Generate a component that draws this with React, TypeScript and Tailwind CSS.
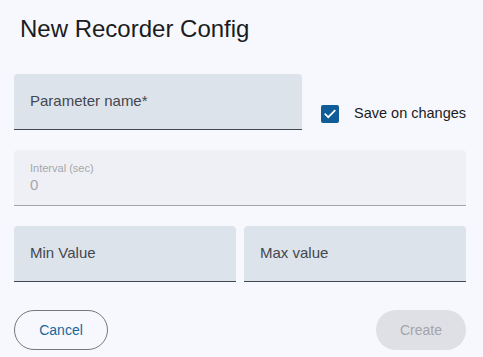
import React from "react";

export default function App() {
  return (
    <div
      className="w-[483px] h-[357px] bg-[#f7f8fd] text-[#1b1b1f] overflow-hidden"
      style={{ fontFamily: '"Liberation Sans", Arial, sans-serif' }}
    >
      <div className="pt-[13px] pl-[20px] text-[24px] leading-[32px] text-[#1b1c20]">
        New Recorder Config
      </div>
      <div className="ml-[14px] w-[452px] pt-[29px] flex flex-col gap-[20px]">
        <div className="flex items-start">
          <div className="w-[288px] shrink-0 h-[56px] rounded-t-[4px] bg-[#dde3eb] border-b border-[#44474e] flex items-center px-[16px]">
            <span className="text-[15px] text-[#44474e]">Parameter name*</span>
          </div>
          <label className="flex items-center ml-[19px] mt-[29px] whitespace-nowrap">
            <span className="w-[18px] h-[18px] shrink-0 rounded-[2px] bg-[#0f5c97] flex items-center justify-center">
              <svg width="14" height="14" viewBox="0 0 24 24" fill="none">
                <path d="M4 12.5l5 5L20 6.5" stroke="#fff" strokeWidth="3" strokeLinecap="square" />
              </svg>
            </span>
            <span className="ml-[15px] text-[14.5px] text-[#1b1c20]">Save on changes</span>
          </label>
        </div>
        <div className="h-[56px] rounded-t-[4px] bg-[#eff0f5] border-b border-[#a3a5ab] flex flex-col justify-center px-[16px]">
          <span className="text-[11px] leading-[14px] text-[#a6a7ab]">Interval (sec)</span>
          <span className="text-[15px] leading-[20px] text-[#a6a7ab]">0</span>
        </div>
        <div className="flex gap-[8px]">
          <div className="flex-1 h-[56px] rounded-t-[4px] bg-[#dde3eb] border-b border-[#44474e] flex items-center px-[16px]">
            <span className="text-[15px] text-[#44474e]">Min Value</span>
          </div>
          <div className="flex-1 h-[56px] rounded-t-[4px] bg-[#dde3eb] border-b border-[#44474e] flex items-center px-[16px]">
            <span className="text-[15px] text-[#44474e]">Max value</span>
          </div>
        </div>
        <div className="flex justify-between mt-[8px]">
          <button className="w-[94px] h-[40px] rounded-full border border-[#75777d] text-[14px] text-[#17679f] bg-transparent">
            Cancel
          </button>
          <button className="w-[90px] h-[40px] rounded-full bg-[#dfe0e5] text-[14px] text-[#a3a4a9]">
            Create
          </button>
        </div>
      </div>
    </div>
  );
}
